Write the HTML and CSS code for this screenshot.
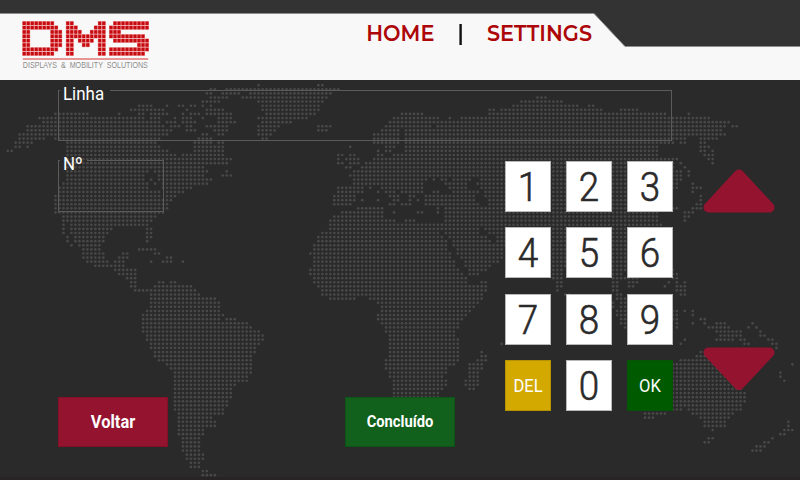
FILE: index.html
```
<!DOCTYPE html>
<html lang="pt">
<head>
<meta charset="utf-8">
<title>DMS</title>
<link rel="stylesheet" href="styles.css">
</head>
<body>
<div class="screen">
  <svg class="map" id="map" width="800" height="480" viewBox="0 0 800 480" aria-hidden="true"></svg>
  <header class="header">
    <svg class="header-shape" width="800" height="80" viewBox="0 0 800 80" aria-hidden="true">
      <path d="M0 13.5H594L625 46.5H800V80H0Z" fill="#f8f8f8"/>
      <path d="M0 13.5H594L625 46.5H800" fill="none" stroke="#8d8d8d" stroke-width="1"/>
    </svg>
    <div class="brand">
      <svg id="logo" width="127" height="39" viewBox="0 0 127 39" role="img" aria-label="DMS"></svg>
      <svg class="tagline" width="130" height="14" viewBox="0 0 130 14"><text x="0.8" y="8" textLength="125" lengthAdjust="spacingAndGlyphs">DISPLAYS &#160;&amp;&#160; MOBILITY &#160;SOLUTIONS</text></svg>
    </div>
    <svg class="nav" width="240" height="36" viewBox="0 0 240 36">
      <text x="5.3" y="25" textLength="68" lengthAdjust="spacingAndGlyphs">HOME</text>
      <rect x="98.4" y="8" width="2.4" height="21" fill="#111"/>
      <text x="126" y="25" textLength="105" lengthAdjust="spacingAndGlyphs">SETTINGS</text>
    </svg>
  </header>
  <main class="content">
    <section class="form">
      <fieldset class="field"><legend><span>Linha</span></legend></fieldset>
      <fieldset class="field field-small"><legend><span>Nº</span></legend></fieldset>
      <div class="actions">
        <button class="btn back"><span>Voltar</span></button>
        <button class="btn done"><span>Concluído</span></button>
      </div>
    </section>
    <section class="keypad">
      <button class="key"><span>1</span></button><button class="key"><span>2</span></button><button class="key"><span>3</span></button>
      <button class="key"><span>4</span></button><button class="key"><span>5</span></button><button class="key"><span>6</span></button>
      <button class="key"><span>7</span></button><button class="key"><span>8</span></button><button class="key"><span>9</span></button>
      <button class="key del"><span>DEL</span></button><button class="key"><span>0</span></button><button class="key ok"><span>OK</span></button>
    </section>
    <nav class="arrows">
      <svg width="72" height="44" viewBox="0 0 72 44"><path d="M36 5.5L66.5 38.5H5.5Z"/></svg>
      <svg width="72" height="44" viewBox="0 0 72 44"><path d="M5.5 5.5H66.5L36 38Z"/></svg>
    </nav>
  </main>
</div>
<script src="script.js"></script>
</body>
</html>
```
FILE: styles.css
```
* { box-sizing: border-box; }
body { margin: 0; background: #2a2a2a; font-family: Roboto, "Liberation Sans", sans-serif; }
.screen { position: relative; width: 800px; height: 480px; overflow: hidden; background: #2a2a2a; border-bottom: 3px solid #282425; }
.map { position: absolute; left: 0; top: 0; fill: #484848; }
.header { position: relative; display: flex; height: 80px; background: #333; }
.header-shape { position: absolute; left: 0; top: 0; }
.brand { position: relative; display: flex; flex-direction: column; width: 130px; margin: 21px 0 0 22px; }
.brand svg { display: block; overflow: visible; }
.tagline text { font: 8.4px "Liberation Sans", sans-serif; fill: #8c8c8c; }
.nav { position: relative; margin: 16px 0 0 209px; }
.nav text { font: 600 22px Montserrat, "Open Sans", sans-serif; fill: #ad0608; }
.content { position: relative; display: flex; height: 400px; }
.form { width: 614px; margin-left: 58px; padding-top: 2px; }
.field { width: 614px; height: 59px; margin: 0; padding: 0 0 0 1px; border: 1px solid #5b5b5b; color: #fff; font-size: 18px; line-height: 17px; }
.field legend { position: relative; top: 3px; padding: 0 3px 0 3px; }
.field legend span { display: inline-block; transform: scaleX(.94); transform-origin: 0 50%; }
.field-small { width: 106px; height: 60px; margin-top: 11px; }
.actions { display: flex; gap: 177px; margin-top: 185px; }
.btn { width: 110px; height: 50px; padding: 0; border: 1px solid rgba(0, 0, 0, .12); border-radius: 0; color: #fff; font: 700 17.5px/48px Roboto, sans-serif; }
.btn span { display: block; transform: scaleX(.94); }
.back { background: #94132f; }
.done { background: #11601b; }
.done span { font-size: 15.7px; }
.keypad { display: grid; grid-template-columns: repeat(3, 46px); grid-auto-rows: 51px; gap: 15.5px 14.8px; margin: 80.5px 0 0 -166.7px; align-content: start; }
.key { padding: 0; border: 1px solid #b8b8b8; background: #fff; color: #2a2a2a; font: 300 40px/51px Roboto, sans-serif; -webkit-text-stroke: .6px #2a2a2a; }
.key span { display: block; transform: scaleX(.92); }
.del, .ok { color: #fff; font-size: 18px; font-weight: 400; line-height: 49px; -webkit-text-stroke: 0; }
.del { border-color: #b59300; background: #d3a900; }
.ok { border-color: #085208; background: #005b00; }
.arrows { display: flex; flex-direction: column; gap: 134px; margin: 89px 0 0 30.5px; }
.arrows svg { display: block; }
.arrows path { fill: #94132f; stroke: #94132f; stroke-width: 10; stroke-linejoin: round; }
```
FILE: script.js
```
const NS = 'http://www.w3.org/2000/svg';
// One line per latitude row; each entry is the horizontal extent of a run of dots.
const rows = `259 318-322
211-215 227-338
207-211 223-239 251-330
211-227 243-327 538-546
203-219 259-322 522-562
139-151 167 179-183 191-195 203 211 263-318 514-578 590-594
131-163 187 207-223 263-318 490-494 502-602 621-637
56-88 119 139-143 151-167 183 191-199 207-231 267-314 402-422 490-666 689
40-143 151-159 175 183-191 203 219-231 259-307 394-438 450 462-709
44-159 167-175 183-195 219-235 263-291 390-446 450-729
28-163 171-179 187-191 207-227 259-279 318-330 386-402 406-430 438-724 732-736
28-171 187-195 215-227 259-275 318-327 382-398 406-720
19-167 203-207 219-223 259-271 374-398 406-724
19-23 28-44 56-159 199-211 263-267 374-398 406-685 701-717
15-19 23-32 68-155 195-211 219-223 374-398 406-673 681-685 701-705
15-19 28 68-159 195-223 350 386-394 406-658 701-709
7-11 68-167 195-223 378 386-390 406-658 701-705 713
68-175 183-223 338-342 350-354 378-382 394-658 705-713
68-175 179-231 338 346-358 374-677 709-713
68-227 338-342 350-358 366-673 681 713
68-203 346-350 362-673 685
68-147 155-207 227 354-681 689
68-143 159-203 223-231 350-681 689
68-143 151 159-211 354-426 434 442-446 454-470 482-681
64-147 155 163-207 354-422 446-466 478-677 693
60-147 163-191 338-362 370 382-386 390-422 450-466 482-677 693-701
60-159 167-183 338-362 378 386-394 402-422 434-438 454-478 486-658 693
56-159 167-175 334-354 390-398 410-414 426-474 486-658 701
56-171 334-354 362 378 394-398 410 418 426-474 490-658 701
56-167 334-350 390-394 402-410 426-478 490-670 697-701
56-167 358-382 438 446-677 693-701
56-163 342-382 394 418-422 438 446-658 685-693
63-155 334-382 446-658 685-689
63-151 330-394 405-414 446-658 685
63 71-147 330-661
63 71-111 147-151 330-478 486-658
63 71-107 147-151 322-438 446-478 490-658
68 76-104 147-151 318-442 450-486 498-658
68 76-104 147 318-446 454-490 498-658
72 80-100 314-446 454-658
84-100 139-155 314-446 458-502 552-658
84-104 123-127 155-159 310-450 458-502 552-658
84-104 119-127 167-171 314-450 462-502 552-658
88-107 115-123 151 163-171 183 314-454 466-498 552-658
96-123 314-454 466-490 552-658
115-135 310-458 470-486 552-562 613-637 673
119-135 310-462 470-478 553-562 613-621 629-637 673-677
127-135 314-466 553-562 613-621 625-637 673-677
131-135 159-163 171-175 314-466 482-486 557-562 613-617 629-637 668 677 685
131-135 155-191 318-486 557-562 613-617 629-633 664 677-685
135-195 322-486 557 613-617 677 681 685
151-199 322-482 565-569 617-621 681-685
151-215 330-355 370-482 617-625
151-219 378-478 613 621-625
151-219 382-474 613 621-625
147-219 382-470 617-625 673-677 685 693
143-223 378-466 617-625 673-677 693
143-219 227-235 378-462 621-625 673-677 701-705
143-247 382-458 621-625 677 693 705 717-724 752
143-251 386-458 625 677 709-728 748 756
143-259 386-454 717-740 760
147-263 390-454 721-740 760-764
147-263 390-458 685 717-732 740-744 768-772
151-259 390-458 502 681 744-748 772-776
151-255 390-458 776
155-255 390-458 482 701-720
155-251 390-458 482-486 697-720
159-251 386-458 478-486 681-724
167-251 386-454 470-482 673-724 792
171-251 386-446 470-482 673-728
175-251 390-446 470-478 673-728 780
175-247 390-442 470-478 673-732 780
175-247 394-446 466-478 673-736 784
175-235 394-446 466-478 673-740
175-231 394-442 470-474 673-740
175-231 394-438 673-744
175-231 394-438 673-744
175-227 673-744
175-227 673-740
175-223 673-681 689-740
179-223 644-665 693-732
179-211 644-652 701-728
179-215 705-724 788
179-215 705-724 788
179-203 713 784-792
179-203 780-784
183-199 709-713 772
183-199 705-709 764-768
183-199 756-764
183-199 752-760
187-203
187-203
191-199
191-199
203-207
203-215`.split('\n');

const STEP = 3.983, X0 = 7.7;
const map = document.getElementById('map');
rows.forEach((row, j) => {
  row.trim().split(/\s+/).forEach(run => {
    const [a, b = a] = run.split('-').map(v => Math.round((v - X0) / STEP));
    for (let k = a; k <= b; k++) {
      const c = document.createElementNS(NS, 'circle');
      c.setAttribute('cx', (X0 + k * STEP).toFixed(2));
      c.setAttribute('cy', (85.2 + j * 4.105).toFixed(2));
      c.setAttribute('r', 1.35);
      map.appendChild(c);
    }
  });
});

const letters = [
  [0.6, ['11111111', '111111111', '1100000111', '1100000111', '1100000111', '1100000111', '111111111', '11111111']],
  [44.2, ['1100000011', '1110000111', '1111001111', '1111111111', '1101111011', '1100110011', '1100000011', '1100000011']],
  [87.4, ['0111111111', '1111111111', '111', '1111111110', '0111111111', '0000000111', '1111111111', '111111111']]
];
const logo = document.getElementById('logo');
const rect = (x, y, w, h, fill) => {
  const r = document.createElementNS(NS, 'rect');
  Object.entries({ x, y, width: w, height: h, fill }).forEach(([k, v]) => r.setAttribute(k, v));
  logo.appendChild(r);
};
letters.forEach(([x, grid]) => grid.forEach((line, j) => [...line].forEach((on, i) => {
  if (on !== '1') return;
  rect(x + i * 4 - .4, .1 + j * 4.35, 4, 4.35, '#f0a8a8');
  rect(x + i * 4, .5 + j * 4.35, 3.2, 3.5, '#c60a0f');
})));
rect(.8, 37.4, 125.4, 1.2, '#dc5555');
```
